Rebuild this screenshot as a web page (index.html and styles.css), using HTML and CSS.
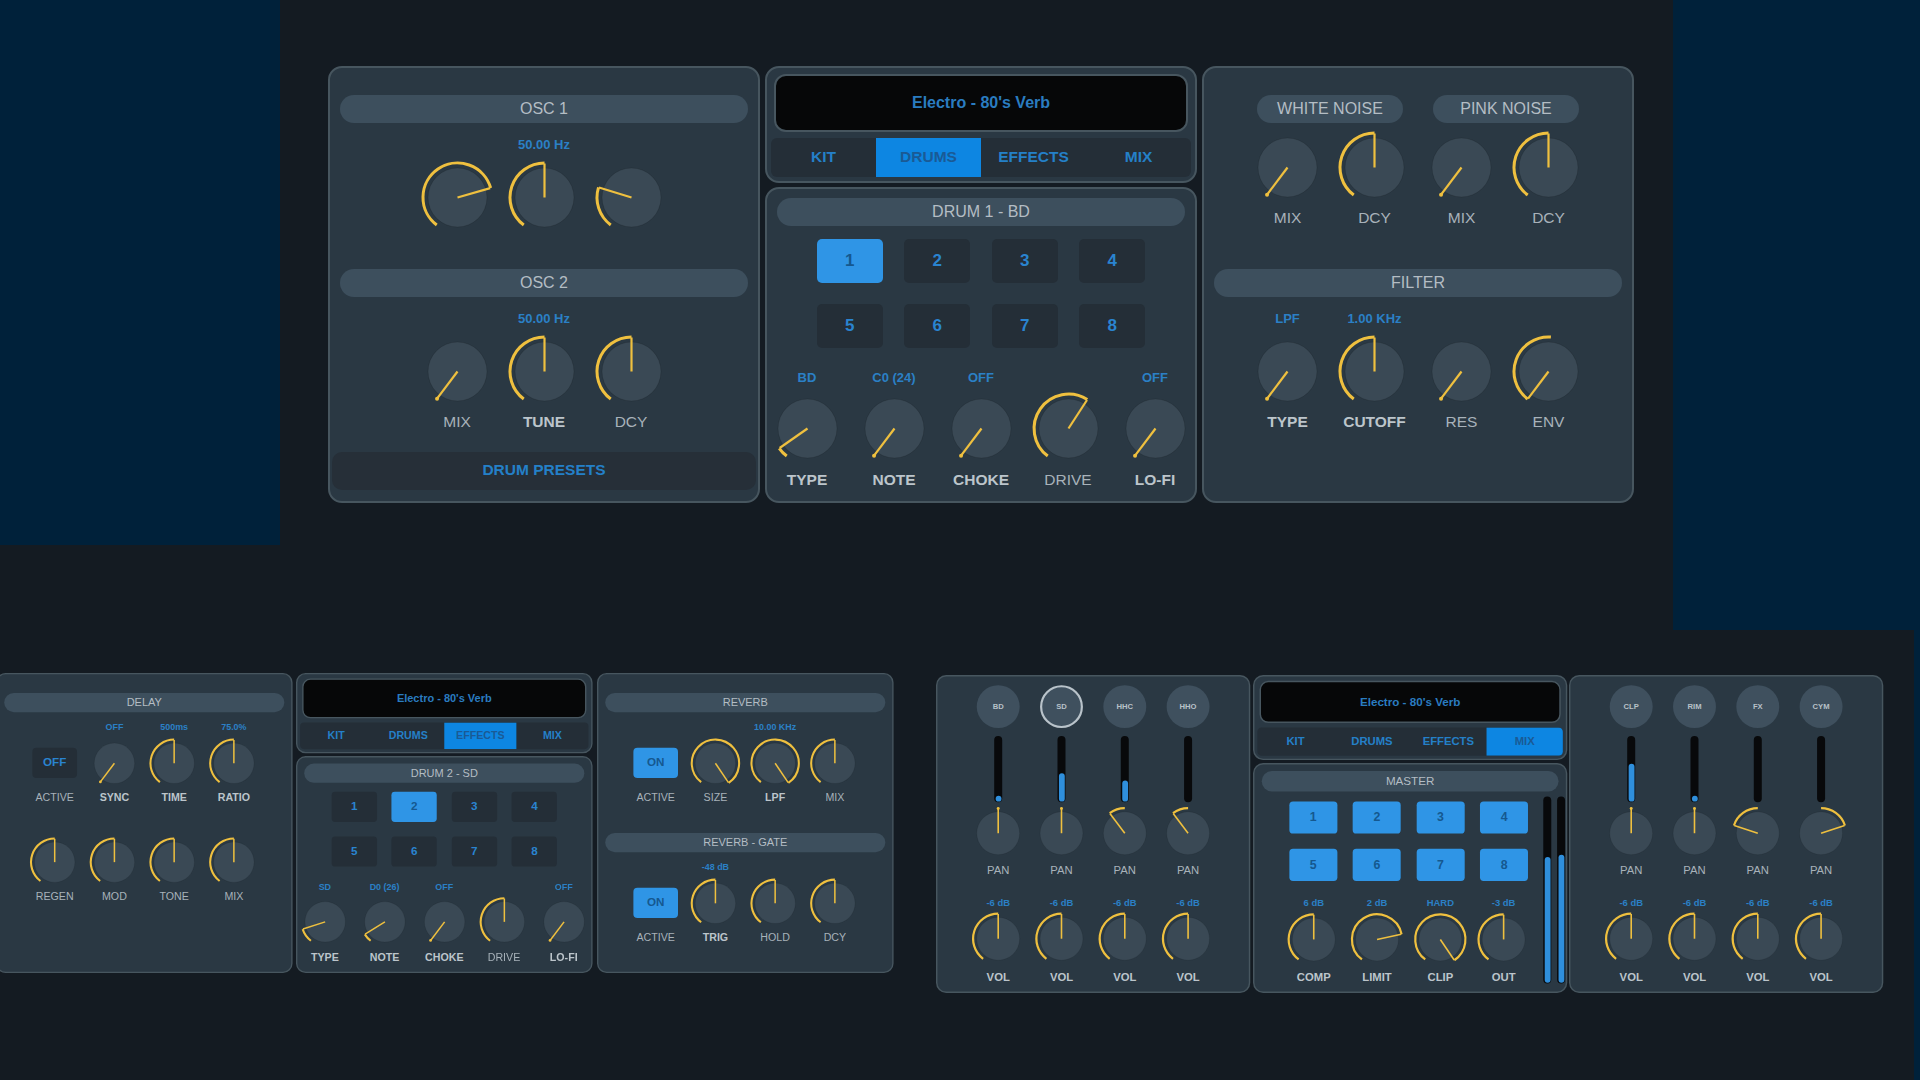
FILE: index.html
```html
<!DOCTYPE html>
<html>
	<head>
		<meta charset="UTF-8">
		<title>Drum synth panels</title>
		<link rel="stylesheet" href="styles.css">
	</head>

	<body>
		<div class="backdrop backdrop-left"></div>
		<div class="backdrop backdrop-right"></div>
		<div class="backdrop backdrop-edge"></div>

		<!-- big view -->
		<div class="win win-osc">
			<div class="panel">
				<div class="sect">
					<div class="bar">OSC 1</div>
					<div class="row row3">
						<div class="cell"><div class="val"></div><div class="knob" data-a="74"></div></div>
						<div class="cell"><div class="val">50.00 Hz</div><div class="knob" data-a="0"></div></div>
						<div class="cell"><div class="val"></div><div class="knob" data-a="-73"></div></div>
					</div>
				</div>
				<div class="sect">
					<div class="bar">OSC 2</div>
					<div class="row row3">
						<div class="cell"><div class="val"></div><div class="knob" data-a="-143"></div><div class="lbl">MIX</div></div>
						<div class="cell"><div class="val">50.00 Hz</div><div class="knob" data-a="0"></div><div class="lbl b">TUNE</div></div>
						<div class="cell"><div class="val"></div><div class="knob" data-a="0"></div><div class="lbl">DCY</div></div>
					</div>
				</div>
				<div class="presets">DRUM PRESETS</div>
			</div>
		</div>

		<div class="win win-center">
			<div class="panel panel-top">
				<div class="display">Electro - 80's Verb</div>
				<div class="tabs">
					<div class="tab">KIT</div>
					<div class="tab on">DRUMS</div>
					<div class="tab">EFFECTS</div>
					<div class="tab">MIX</div>
				</div>
			</div>
			<div class="panel panel-drum">
				<div class="bar">DRUM 1 - BD</div>
				<div class="pads">
					<div class="pad on">1</div><div class="pad">2</div><div class="pad">3</div><div class="pad">4</div>
					<div class="pad">5</div><div class="pad">6</div><div class="pad">7</div><div class="pad">8</div>
				</div>
				<div class="row row5 row-tight">
					<div class="cell"><div class="val">BD</div><div class="knob" data-a="-125"></div><div class="lbl b">TYPE</div></div>
					<div class="cell"><div class="val">C0 (24)</div><div class="knob" data-a="-143"></div><div class="lbl b">NOTE</div></div>
					<div class="cell"><div class="val">OFF</div><div class="knob" data-a="-143"></div><div class="lbl b">CHOKE</div></div>
					<div class="cell"><div class="val"></div><div class="knob" data-a="33"></div><div class="lbl">DRIVE</div></div>
					<div class="cell"><div class="val">OFF</div><div class="knob" data-a="-143"></div><div class="lbl b">LO-FI</div></div>
				</div>
			</div>
		</div>

		<div class="win win-noise">
			<div class="panel">
				<div class="sect">
					<div class="pills">
						<div class="bar pill">WHITE NOISE</div>
						<div class="bar pill">PINK NOISE</div>
					</div>
					<div class="row row-plain">
						<div class="cell"><div class="knob" data-a="-143"></div><div class="lbl">MIX</div></div>
						<div class="cell"><div class="knob" data-a="0"></div><div class="lbl">DCY</div></div>
						<div class="cell"><div class="knob" data-a="-143"></div><div class="lbl">MIX</div></div>
						<div class="cell"><div class="knob" data-a="0"></div><div class="lbl">DCY</div></div>
					</div>
				</div>
				<div class="sect">
					<div class="bar">FILTER</div>
					<div class="row">
						<div class="cell"><div class="val">LPF</div><div class="knob" data-a="-143"></div><div class="lbl b">TYPE</div></div>
						<div class="cell"><div class="val">1.00 KHz</div><div class="knob" data-a="0"></div><div class="lbl b">CUTOFF</div></div>
						<div class="cell"><div class="val"></div><div class="knob" data-a="-143"></div><div class="lbl">RES</div></div>
						<div class="cell"><div class="val"></div><div class="knob" data-a="-143" data-e="4"></div><div class="lbl">ENV</div></div>
					</div>
				</div>
			</div>
		</div>

		<!-- effects page -->
		<div class="win win-delay">
			<div class="panel">
				<div class="bar">DELAY</div>
				<div class="row">
					<div class="cell"><div class="val"></div><div class="slot"><div class="toggle">OFF</div></div><div class="lbl">ACTIVE</div></div>
					<div class="cell"><div class="val">OFF</div><div class="knob" data-a="-143"></div><div class="lbl b">SYNC</div></div>
					<div class="cell"><div class="val">500ms</div><div class="knob" data-a="0"></div><div class="lbl b">TIME</div></div>
					<div class="cell"><div class="val">75.0%</div><div class="knob" data-a="0"></div><div class="lbl b">RATIO</div></div>
				</div>
				<div class="row row-gap">
					<div class="cell"><div class="knob" data-a="0"></div><div class="lbl">REGEN</div></div>
					<div class="cell"><div class="knob" data-a="0"></div><div class="lbl">MOD</div></div>
					<div class="cell"><div class="knob" data-a="0"></div><div class="lbl">TONE</div></div>
					<div class="cell"><div class="knob" data-a="0"></div><div class="lbl">MIX</div></div>
				</div>
			</div>
		</div>

		<div class="win win-center-fx">
			<div class="panel panel-top">
				<div class="display">Electro - 80's Verb</div>
				<div class="tabs">
					<div class="tab">KIT</div>
					<div class="tab">DRUMS</div>
					<div class="tab on">EFFECTS</div>
					<div class="tab">MIX</div>
				</div>
			</div>
			<div class="panel panel-drum">
				<div class="bar">DRUM 2 - SD</div>
				<div class="pads">
					<div class="pad">1</div><div class="pad on">2</div><div class="pad">3</div><div class="pad">4</div>
					<div class="pad">5</div><div class="pad">6</div><div class="pad">7</div><div class="pad">8</div>
				</div>
				<div class="row row5 row-tight">
					<div class="cell"><div class="val">SD</div><div class="knob" data-a="-108"></div><div class="lbl b">TYPE</div></div>
					<div class="cell"><div class="val">D0 (26)</div><div class="knob" data-a="-122"></div><div class="lbl b">NOTE</div></div>
					<div class="cell"><div class="val">OFF</div><div class="knob" data-a="-143"></div><div class="lbl b">CHOKE</div></div>
					<div class="cell"><div class="val"></div><div class="knob" data-a="0"></div><div class="lbl">DRIVE</div></div>
					<div class="cell"><div class="val">OFF</div><div class="knob" data-a="-143"></div><div class="lbl b">LO-FI</div></div>
				</div>
			</div>
		</div>

		<div class="win win-reverb">
			<div class="panel">
				<div class="sect sect-tall">
					<div class="bar">REVERB</div>
					<div class="row">
						<div class="cell"><div class="val"></div><div class="slot"><div class="toggle on">ON</div></div><div class="lbl">ACTIVE</div></div>
						<div class="cell"><div class="val"></div><div class="knob" data-a="146"></div><div class="lbl">SIZE</div></div>
						<div class="cell"><div class="val">10.00 KHz</div><div class="knob" data-a="146"></div><div class="lbl b">LPF</div></div>
						<div class="cell"><div class="val"></div><div class="knob" data-a="0"></div><div class="lbl">MIX</div></div>
					</div>
				</div>
				<div class="sect">
					<div class="bar">REVERB - GATE</div>
					<div class="row">
						<div class="cell"><div class="val"></div><div class="slot"><div class="toggle on">ON</div></div><div class="lbl">ACTIVE</div></div>
						<div class="cell"><div class="val">-48 dB</div><div class="knob" data-a="0"></div><div class="lbl b">TRIG</div></div>
						<div class="cell"><div class="val"></div><div class="knob" data-a="0"></div><div class="lbl">HOLD</div></div>
						<div class="cell"><div class="val"></div><div class="knob" data-a="0"></div><div class="lbl">DCY</div></div>
					</div>
				</div>
			</div>
		</div>

		<!-- mix page -->
		<div class="win win-mix-a">
			<div class="panel panel-mix">
				<div class="strips">
					<div class="strip">
						<div class="name">BD</div>
						<div class="meter"><div class="fill fill-dot"></div></div>
						<div class="knob" data-a="0" data-s="0"></div>
						<div class="lbl">PAN</div>
						<div class="val">-6 dB</div>
						<div class="knob" data-a="0"></div>
						<div class="lbl b">VOL</div>
					</div>
					<div class="strip">
						<div class="name selected">SD</div>
						<div class="meter"><div class="fill fill-sd"></div></div>
						<div class="knob" data-a="0" data-s="0"></div>
						<div class="lbl">PAN</div>
						<div class="val">-6 dB</div>
						<div class="knob" data-a="0"></div>
						<div class="lbl b">VOL</div>
					</div>
					<div class="strip">
						<div class="name">HHC</div>
						<div class="meter"><div class="fill fill-hhc"></div></div>
						<div class="knob" data-a="-37" data-s="0"></div>
						<div class="lbl">PAN</div>
						<div class="val">-6 dB</div>
						<div class="knob" data-a="0"></div>
						<div class="lbl b">VOL</div>
					</div>
					<div class="strip">
						<div class="name">HHO</div>
						<div class="meter"></div>
						<div class="knob" data-a="-37" data-s="0"></div>
						<div class="lbl">PAN</div>
						<div class="val">-6 dB</div>
						<div class="knob" data-a="0"></div>
						<div class="lbl b">VOL</div>
					</div>
				</div>
			</div>
		</div>

		<div class="win win-center-mix">
			<div class="panel panel-top">
				<div class="display">Electro - 80's Verb</div>
				<div class="tabs">
					<div class="tab">KIT</div>
					<div class="tab">DRUMS</div>
					<div class="tab">EFFECTS</div>
					<div class="tab on">MIX</div>
				</div>
			</div>
			<div class="panel panel-drum">
				<div class="bar">MASTER</div>
				<div class="master">
					<div class="master-left">
						<div class="pads pads-master">
							<div class="pad on">1</div><div class="pad on">2</div><div class="pad on">3</div><div class="pad on">4</div>
							<div class="pad on">5</div><div class="pad on">6</div><div class="pad on">7</div><div class="pad on">8</div>
						</div>
						<div class="row row-tight">
							<div class="cell"><div class="val">6 dB</div><div class="knob" data-a="0"></div><div class="lbl b">COMP</div></div>
							<div class="cell"><div class="val">2 dB</div><div class="knob" data-a="78"></div><div class="lbl b">LIMIT</div></div>
							<div class="cell"><div class="val">HARD</div><div class="knob" data-a="146"></div><div class="lbl b">CLIP</div></div>
							<div class="cell"><div class="val">-3 dB</div><div class="knob" data-a="0"></div><div class="lbl b">OUT</div></div>
						</div>
					</div>
					<div class="meter meter-master"><div class="fill fill-l"></div></div>
					<div class="meter meter-master"><div class="fill fill-r"></div></div>
				</div>
			</div>
		</div>

		<div class="win win-mix-b">
			<div class="panel panel-mix">
				<div class="strips">
					<div class="strip">
						<div class="name">CLP</div>
						<div class="meter"><div class="fill fill-clp"></div></div>
						<div class="knob" data-a="0" data-s="0"></div>
						<div class="lbl">PAN</div>
						<div class="val">-6 dB</div>
						<div class="knob" data-a="0"></div>
						<div class="lbl b">VOL</div>
					</div>
					<div class="strip">
						<div class="name">RIM</div>
						<div class="meter"><div class="fill fill-dot"></div></div>
						<div class="knob" data-a="0" data-s="0"></div>
						<div class="lbl">PAN</div>
						<div class="val">-6 dB</div>
						<div class="knob" data-a="0"></div>
						<div class="lbl b">VOL</div>
					</div>
					<div class="strip">
						<div class="name">FX</div>
						<div class="meter"></div>
						<div class="knob" data-a="-72" data-s="0"></div>
						<div class="lbl">PAN</div>
						<div class="val">-6 dB</div>
						<div class="knob" data-a="0"></div>
						<div class="lbl b">VOL</div>
					</div>
					<div class="strip">
						<div class="name">CYM</div>
						<div class="meter"></div>
						<div class="knob" data-a="72" data-s="0"></div>
						<div class="lbl">PAN</div>
						<div class="val">-6 dB</div>
						<div class="knob" data-a="0"></div>
						<div class="lbl b">VOL</div>
					</div>
				</div>
			</div>
		</div>

		<script src="knobs.js"></script>
	</body>
</html>
```

FILE: styles.css
```css
body, html {
	height: 100%;
	margin: 0;
	overflow: hidden;
	background: #141b22;
}
* {
	box-sizing: border-box;
	font-family: "Liberation Sans", Arial, sans-serif;
}

/* blue page showing behind the panels */
.backdrop {
	position: absolute;
	background: #00213a;
}
.backdrop-left {
	left: 0;
	top: 0;
	width: 280px;
	height: 545px;
}
.backdrop-right {
	left: 1673px;
	top: 0;
	width: 247px;
	height: 630px;
}
.backdrop-edge {
	left: 1914px;
	top: 630px;
	width: 6px;
	height: 450px;
}

/* every window is laid out at 432x437 and scaled to where it sits */
.win {
	position: absolute;
	width: 432px;
	height: 437px;
	display: flex;
	flex-direction: column;
	gap: 4px;
	transform-origin: 0 0;
}
.win-osc { left: 328px; top: 66px; }
.win-center { left: 765px; top: 66px; }
.win-noise { left: 1202px; top: 66px; }
.win-delay { left: -4px; top: 673px; transform: scale(0.6865); }
.win-center-fx { left: 296px; top: 673px; transform: scale(0.6865); }
.win-reverb { left: 597px; top: 673px; transform: scale(0.6865); }
.win-mix-a { left: 936px; top: 675px; transform: scale(0.7275); }
.win-center-mix { left: 1253px; top: 675px; transform: scale(0.7275); }
.win-mix-b { left: 1569px; top: 675px; transform: scale(0.7275); }

.panel {
	height: 100%;
	display: flex;
	flex-direction: column;
	padding: 27px 10px 0;
	background: #2a3843;
	border: 2px solid #47565f;
	border-radius: 14px;
}
.panel-top {
	flex: none;
	height: 117px;
	padding: 6px 4px 0;
}
.panel-drum {
	flex: 1;
	height: auto;
	padding-top: 9px;
}
.panel-mix {
	padding-top: 12px;
}

.bar {
	flex: none;
	height: 28px;
	line-height: 28px;
	border-radius: 14px;
	background: #3d4f5d;
	color: #b4bdc4;
	font-size: 16px;
	text-align: center;
}
.sect {
	flex: none;
	height: 174px;
}
.sect-tall {
	height: 204px;
}
.pills {
	display: flex;
	justify-content: center;
	gap: 30px;
}
.pill {
	width: 146px;
}

/* rows of knobs */
.row {
	display: grid;
	grid-template-columns: repeat(4, 87px);
	justify-content: center;
	margin-top: 14px;
}
.row3 {
	grid-template-columns: repeat(3, 87px);
}
.row5 {
	grid-template-columns: repeat(5, 87px);
}
.row-plain {
	margin-top: 0;
}
.row-gap {
	margin-top: 40px;
}
.cell {
	display: flex;
	flex-direction: column;
	align-items: center;
}
.val {
	height: 16px;
	line-height: 16px;
	font-size: 13px;
	font-weight: bold;
	color: #2b80c6;
	white-space: nowrap;
}
.knob {
	width: 59px;
	height: 59px;
	margin-top: 14.5px;
}
.knob svg {
	display: block;
	overflow: visible;
}
.disc {
	fill: #3a4955;
	stroke: rgba(0, 0, 0, 0.12);
}
.arc {
	fill: none;
	stroke: #efc03f;
	stroke-width: 3;
}
.tick {
	stroke: #efc03f;
	stroke-width: 2.2;
}
.dot {
	stroke: #efc03f;
	stroke-width: 4;
	stroke-linecap: round;
}
.lbl {
	height: 18px;
	line-height: 18px;
	margin-top: 12.5px;
	font-size: 15.5px;
	color: #a8b2ba;
	white-space: nowrap;
}
.lbl.b {
	font-weight: bold;
	color: #bcc5cb;
}
.row-tight {
	margin-top: 22.5px;
}
.row-tight .knob {
	margin-top: 12.5px;
}
.row-tight .lbl {
	margin-top: 13.5px;
}

.slot {
	height: 59px;
	margin-top: 14.5px;
	display: flex;
	align-items: center;
}
.toggle {
	width: 65px;
	height: 44px;
	line-height: 44px;
	border-radius: 6px;
	background: #242e37;
	color: #2a84d0;
	font-size: 17px;
	font-weight: bold;
	text-align: center;
}
.toggle.on {
	background: #2f95e6;
	color: #15588f;
}

.presets {
	flex: none;
	height: 38px;
	line-height: 36px;
	margin: auto -8px 11px;
	border-radius: 10px;
	background: #262f38;
	color: #2480c8;
	font-size: 15.5px;
	font-weight: bold;
	text-align: center;
}

.display {
	height: 58px;
	line-height: 54px;
	margin: 0 3px;
	background: #060708;
	border: 2px solid #47565f;
	border-radius: 12px;
	color: #2a7cc0;
	font-size: 16px;
	font-weight: bold;
	text-align: center;
}
.tabs {
	display: grid;
	grid-template-columns: repeat(4, 1fr);
	height: 39px;
	margin-top: 6px;
	background: #242e37;
	border-radius: 6px;
	overflow: hidden;
}
.tab {
	line-height: 38px;
	color: #2480c8;
	font-size: 15.5px;
	font-weight: bold;
	text-align: center;
}
.tab.on {
	background: #0d86e2;
	color: #1a5a95;
}

.pads {
	display: grid;
	grid-template-columns: repeat(4, 66px);
	grid-auto-rows: 43.5px;
	justify-content: center;
	gap: 21.5px;
	margin-top: 13px;
}
.pad {
	display: flex;
	align-items: center;
	justify-content: center;
	border-radius: 5px;
	background: #242e37;
	color: #2a84d0;
	font-size: 17px;
	font-weight: bold;
}
.pad.on {
	background: #2f95e6;
	color: #15588f;
}

/* mixer strips */
.strips {
	display: grid;
	grid-template-columns: repeat(4, 87px);
	justify-content: center;
}
.strip {
	display: flex;
	flex-direction: column;
	align-items: center;
}
.name {
	width: 59px;
	height: 59px;
	line-height: 59px;
	border-radius: 50%;
	background: #3f505e;
	color: #b8c1c8;
	font-size: 10.5px;
	font-weight: bold;
	text-align: center;
}
.name.selected {
	line-height: 53px;
	border: 3px solid #b9c3ca;
}
.meter {
	position: relative;
	flex: none;
	width: 11px;
	height: 91px;
	margin-top: 11px;
	padding: 1.5px;
	display: flex;
	align-items: flex-end;
	background: #08090b;
	border-radius: 6px;
}
.fill {
	width: 100%;
	border-radius: 4px;
	background: #2f8fdc;
}
.fill-dot { height: 8px; }
.fill-sd { height: 39px; }
.fill-hhc { height: 29px; }
.fill-clp { height: 52px; }
.strip .knob {
	margin-top: 13px;
}
.strip .val {
	margin-top: 27px;
}
.strip .val + .knob {
	margin-top: 12px;
}
.strip .lbl {
	margin-top: 12.5px;
}
.strip .lbl.b {
	margin-top: 15px;
}

/* master page */
.master {
	display: flex;
	gap: 8px;
	margin-top: 7px;
}
.master-left {
	flex: none;
	width: 348px;
	margin-left: 28px;
	margin-right: 3px;
	padding-top: 7px;
}
.pads-master {
	margin-top: 0;
}
.meter-master {
	height: 257px;
	margin-top: 0;
}
.fill-l { height: 68%; }
.fill-r { height: 69%; }
```

FILE: knobs.js
```js
// draws each .knob as an svg: disc, yellow arc and the pointer line
// data-a pointer angle, data-s / data-e arc start and end (degrees from 12 o'clock)
var ARC_R = 34.5;
var TICK_R = 34;

function polar(r, deg) {
	var a = deg * Math.PI / 180;
	return (r * Math.sin(a)).toFixed(2) + " " + (-r * Math.cos(a)).toFixed(2);
}

function drawKnob(knob) {
	var a = parseFloat(knob.dataset.a);
	var s = knob.dataset.s ? parseFloat(knob.dataset.s) : -143;
	var e = knob.dataset.e ? parseFloat(knob.dataset.e) : a;
	var from = Math.min(s, e);
	var to = Math.max(s, e);
	var big = to - from > 180 ? 1 : 0;

	var svg = '<svg width="59" height="59" viewBox="-29.5 -29.5 59 59">';
	svg += '<circle class="disc" r="29.5"></circle>';
	if (to > from) {
		svg += '<path class="arc" d="M' + polar(ARC_R, from) + ' A' + ARC_R + ' ' + ARC_R + ' 0 ' + big + ' 1 ' + polar(ARC_R, to) + '"></path>';
	} else {
		// no travel yet, only a dot at the tip
		svg += '<path class="dot" d="M' + polar(TICK_R, a) + ' L' + polar(TICK_R, a) + '"></path>';
	}
	svg += '<path class="tick" d="M0 0 L' + polar(TICK_R, a) + '"></path>';
	svg += '</svg>';
	knob.innerHTML = svg;
}

document.querySelectorAll(".knob").forEach(drawKnob);
```
